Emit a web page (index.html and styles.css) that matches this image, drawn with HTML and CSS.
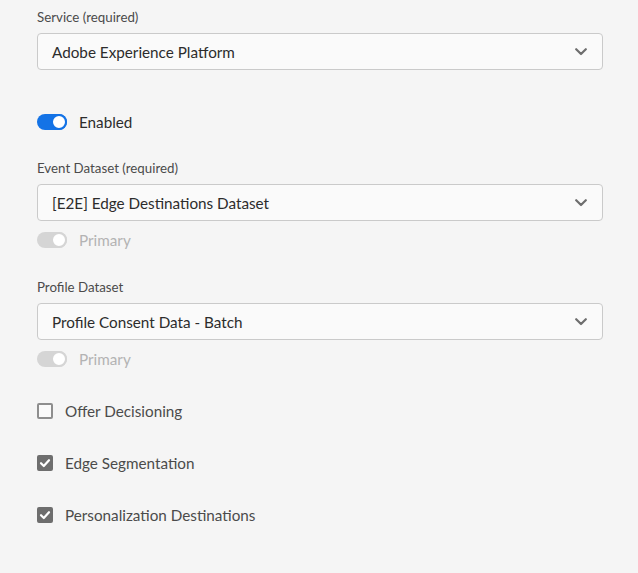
FILE: index.html
```html
<!DOCTYPE html>
<html>
<head>
<meta charset="utf-8">
<link rel="stylesheet" href="styles.css">
</head>
<body>
<div class="form">
  <div class="field field-first">
    <div class="label">Service (required)</div>
    <div class="select">
      <span class="value">Adobe Experience Platform</span>
      <svg class="chev" width="12" height="8" viewBox="0 0 12 8"><path d="M1.2 1.2 L6 6 L10.8 1.2" fill="none" stroke="#6e6e6e" stroke-width="2.2" stroke-linecap="round" stroke-linejoin="round"/></svg>
    </div>
  </div>

  <div class="switch-row enabled-row">
    <span class="switch on"><span class="knob"></span></span>
    <span class="switch-label">Enabled</span>
  </div>

  <div class="field field-event">
    <div class="label">Event Dataset (required)</div>
    <div class="select">
      <span class="value">[E2E] Edge Destinations Dataset</span>
      <svg class="chev" width="12" height="8" viewBox="0 0 12 8"><path d="M1.2 1.2 L6 6 L10.8 1.2" fill="none" stroke="#6e6e6e" stroke-width="2.2" stroke-linecap="round" stroke-linejoin="round"/></svg>
    </div>
    <div class="switch-row primary-row">
      <span class="switch disabled"><span class="knob"></span></span>
      <span class="switch-label muted">Primary</span>
    </div>
  </div>

  <div class="field field-profile">
    <div class="label">Profile Dataset</div>
    <div class="select">
      <span class="value">Profile Consent Data - Batch</span>
      <svg class="chev" width="12" height="8" viewBox="0 0 12 8"><path d="M1.2 1.2 L6 6 L10.8 1.2" fill="none" stroke="#6e6e6e" stroke-width="2.2" stroke-linecap="round" stroke-linejoin="round"/></svg>
    </div>
    <div class="switch-row primary-row">
      <span class="switch disabled"><span class="knob"></span></span>
      <span class="switch-label muted">Primary</span>
    </div>
  </div>

  <div class="checks">
    <div class="check-row">
      <span class="box"></span>
      <span class="check-label">Offer Decisioning</span>
    </div>
    <div class="check-row">
      <span class="box checked"><svg width="12" height="10" viewBox="0 0 12 10"><path d="M2 5.2 L4.8 8 L10 2.2" fill="none" stroke="#fff" stroke-width="2.2" stroke-linecap="round" stroke-linejoin="round"/></svg></span>
      <span class="check-label">Edge Segmentation</span>
    </div>
    <div class="check-row">
      <span class="box checked"><svg width="12" height="10" viewBox="0 0 12 10"><path d="M2 5.2 L4.8 8 L10 2.2" fill="none" stroke="#fff" stroke-width="2.2" stroke-linecap="round" stroke-linejoin="round"/></svg></span>
      <span class="check-label">Personalization Destinations</span>
    </div>
  </div>
</div>
</body>
</html>
```

FILE: styles.css
```css
html, body {
  margin: 0;
  padding: 0;
  background: #f5f5f5;
}
body {
  font-family: Lato, "Open Sans", sans-serif;
  color: #2c2c2c;
}
.form {
  padding: 8px 35px 0 37px;
}
.label {
  font-size: 13.3px;
  line-height: 18px;
  color: #4b4b4b;
  margin-bottom: 7px;
}
.select {
  box-sizing: border-box;
  height: 37px;
  border: 1px solid #cacaca;
  border-radius: 4px;
  background: #fafafa;
  display: flex;
  align-items: center;
  justify-content: space-between;
  padding: 0 15px 0 14px;
}
.value {
  font-size: 15.25px;
  color: #2c2c2c;
}
.chev {
  display: block;
}
.switch-row {
  display: flex;
  align-items: center;
  gap: 12px;
}
.enabled-row {
  height: 32px;
  margin-top: 36px;
}
.primary-row {
  height: 24px;
  margin-top: 7px;
}
.switch {
  box-sizing: border-box;
  width: 30px;
  height: 16px;
  border-radius: 8px;
  position: relative;
  flex: none;
}
.switch.on {
  background: #1473e6;
}
.switch.disabled {
  background: #d5d5d5;
}
.knob {
  position: absolute;
  top: 0;
  right: 0;
  box-sizing: border-box;
  width: 16px;
  height: 16px;
  border-radius: 50%;
  background: #fff;
  border: 2px solid #1473e6;
}
.switch.disabled .knob {
  border-color: #d5d5d5;
}
.switch-label {
  font-size: 15.25px;
  color: #2c2c2c;
}
.switch-label.muted {
  color: #b3b3b3;
}
.field-event {
  margin-top: 21px;
}
.field-profile {
  margin-top: 26px;
}
.checks {
  margin-top: 24px;
  display: flex;
  flex-direction: column;
  gap: 20px;
}
.check-row {
  height: 32px;
  display: flex;
  align-items: center;
  gap: 12px;
}
.box {
  box-sizing: border-box;
  width: 16px;
  height: 16px;
  border: 2px solid #8e8e8e;
  border-radius: 2px;
  background: #fafafa;
  flex: none;
  display: flex;
  align-items: center;
  justify-content: center;
}
.box.checked {
  background: #6e6e6e;
  border-color: #6e6e6e;
}
.box svg {
  display: block;
}
.check-label {
  font-size: 15.25px;
  color: #4b4b4b;
}
```
